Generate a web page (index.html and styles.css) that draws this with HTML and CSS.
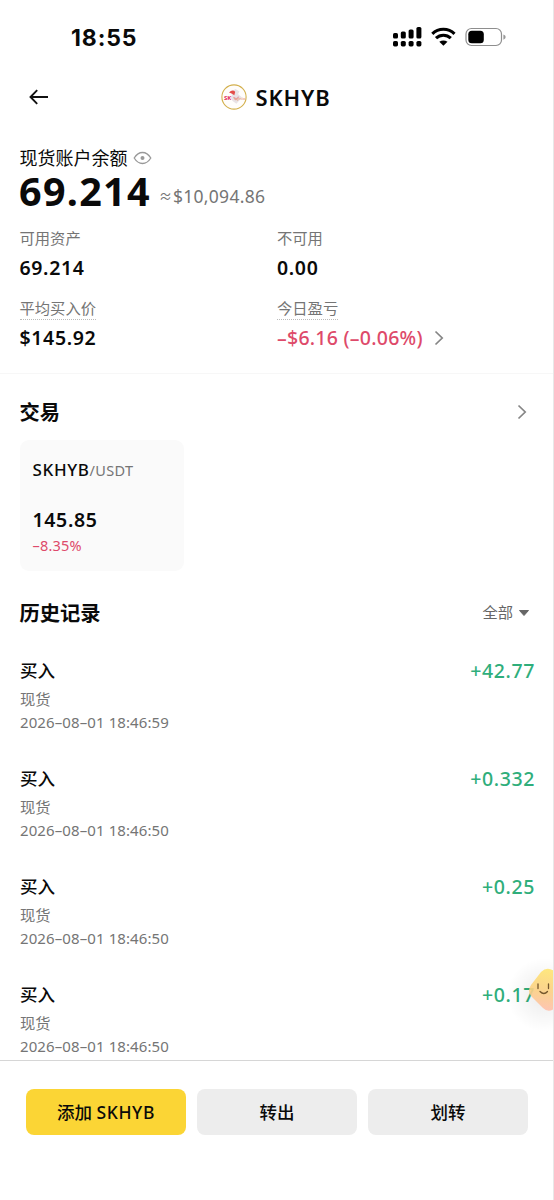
FILE: index.html
```html
<!DOCTYPE html>
<html lang="zh-CN">
<head>
<meta charset="utf-8">
<title>SKHYB</title>
<link rel="stylesheet" href="styles.css">
</head>
<body>
<div class="screen">
  <header class="status">
    <span class="clock">18:55</span>
    <svg class="status-icons" width="114" height="24" viewBox="0 0 114 24">
      <g fill="#000">
        <rect x="1" y="8" width="5" height="5.500" rx="1.6"/><rect x="8.800" y="6.500" width="5" height="7" rx="1.600"/><rect x="16.600" y="4.500" width="5" height="9" rx="1.600"/><rect x="24.400" y="2" width="5" height="11.500" rx="1.600"/>
        <rect x="1" y="16" width="5" height="5.400" rx="1.600"/><rect x="8.800" y="16" width="5" height="5.400" rx="1.600"/><rect x="16.600" y="16" width="5" height="5.400" rx="1.600"/><rect x="24.400" y="16" width="5" height="5.400" rx="1.600"/>
        <path d="M47.300 16.700q4.100-2.500 8.200 0l-4.100 4z"/>
      </g>
      <g fill="none" stroke="#000" stroke-width="3.100">
        <path d="M40.300 8.800c6.200-6 16-6 22.200 0"/><path d="M44 13.200c4.200-4 10.600-4 14.800 0"/>
      </g>
      <rect x="74" y="3.500" width="35.500" height="17" rx="5.500" fill="none" stroke="#8e8e8e" stroke-width="1.200"/>
      <rect x="76.300" y="5.800" width="15.500" height="12.500" rx="3.500"/>
      <path d="M111.400 9.500q2.300.7 2.300 2.600t-2.300 2.600z" fill="#999"/>
    </svg>
  </header>

  <nav class="nav">
    <svg class="back" width="20" height="16" viewBox="0 0 20 16"><path d="M19 8H2M8.200 1.200 1.500 8l6.700 6.800" fill="none" stroke="#111" stroke-width="1.900"/></svg>
    <div class="coin">
      <svg width="26" height="26" viewBox="0 0 26 26">
        <circle cx="13" cy="13" r="12.100" fill="#fffdfb" stroke="#d3b04d" stroke-width="1.100"/>
        <path d="M9 8.500 14.500 5l4 2.500-1.500 2.600 4 3.300-5.600 6.300-3.800-2.600-2.400-4 2-2z" fill="#e8e2e5"/>
        <path d="M8 8.500q3.200-3.300 6.200-.8l-.9 3.600q-2.400-2.300-5.300-2.800z" fill="#e44c48"/>
        <path d="m12.500 13.300 2.300 2.200 3-2.800" stroke="#e7a4ac" stroke-width="1.500" fill="none"/>
        <text class="coin-sk" x="3" y="16">SK</text><text class="coin-hy" x="13.500" y="16">hynix</text>
      </svg>
      <h1 class="coin-name">SKHYB</h1>
    </div>
  </nav>

  <section class="balance">
    <div class="balance-label">现货账户余额
      <svg width="19" height="14" viewBox="0 0 19 14"><path d="M1.200 7C3.500 3.300 6.100 1.500 9.500 1.500S15.500 3.300 17.800 7c-2.300 3.700-4.900 5.500-8.300 5.500S3.500 10.700 1.200 7z" fill="none" stroke="#999" stroke-width="1.300"/><circle cx="9.500" cy="7" r="2" fill="#999"/></svg>
    </div>
    <div class="total"><span class="amount">69.214</span><span class="approx">≈</span><span class="fiat">$10,094.86</span></div>
    <div class="stats">
      <div class="stat"><span class="label">可用资产</span><span class="value">69.214</span></div>
      <div class="stat"><span class="label">不可用</span><span class="value">0.00</span></div>
      <div class="stat"><span class="label dotted">平均买入价</span><span class="value">$145.92</span></div>
      <div class="stat"><span class="label dotted">今日盈亏</span><span class="value loss"><span class="pnl">–$6.16 (–0.06%)</span><svg width="10" height="16" viewBox="0 0 10 16"><path d="m1.500 1.500 6.700 6.500-6.700 6.500" fill="none" stroke="#858585" stroke-width="1.700"/></svg></span></div>
    </div>
  </section>

  <section class="trade">
    <div class="section-head"><h2>交易</h2><svg class="more" width="10" height="16" viewBox="0 0 10 16"><path d="m1.500 1.500 6.700 6.500-6.700 6.500" fill="none" stroke="#858585" stroke-width="1.700"/></svg></div>
    <div class="pair">
      <div class="pair-name">SKHYB<span class="quote">/USDT</span></div>
      <div class="price">145.85</div>
      <div class="change">–8.35%</div>
    </div>
  </section>

  <section class="history">
    <div class="section-head"><h2>历史记录</h2><div class="filter">全部<svg width="10" height="6" viewBox="0 0 10 6"><path d="M.5.500h9L5 5.500z" fill="#666" stroke="#666" stroke-linejoin="round"/></svg></div></div>
    <div class="record"><div class="info"><b>买入</b><span class="kind">现货</span><time>2026–08–01 18:46:59</time></div><span class="gain">+42.77</span></div>
    <div class="record"><div class="info"><b>买入</b><span class="kind">现货</span><time>2026–08–01 18:46:50</time></div><span class="gain">+0.332</span></div>
    <div class="record"><div class="info"><b>买入</b><span class="kind">现货</span><time>2026–08–01 18:46:50</time></div><span class="gain">+0.25</span></div>
    <div class="record"><div class="info"><b>买入</b><span class="kind">现货</span><time>2026–08–01 18:46:50</time></div><span class="gain">+0.17</span></div>
  </section>

  <svg class="mascot" width="54" height="84" viewBox="0 0 54 84">
    <defs>
      <linearGradient id="body" x1="0.600" y1="0" x2="0.500" y2="1"><stop offset="0" stop-color="#ffe670"/><stop offset=".55" stop-color="#fcd084"/><stop offset="1" stop-color="#ffc0ac"/></linearGradient>
      <radialGradient id="glow"><stop offset="0" stop-color="#000" stop-opacity=".08"/><stop offset="1" stop-color="#000" stop-opacity="0"/></radialGradient>
    </defs>
    <circle cx="45" cy="45" r="37" fill="url(#glow)"/>
    <path d="M42 22q6-6 13-1l14 14q4 5 0 9L55 59q-6 4-11-1L32 46q-4-5 0-11z" fill="url(#body)" fill-opacity=".9"/>
    <path d="M39 34v4.500M49.500 34v4.500M41 41.500q4 4 7.500 0" fill="none" stroke="#75572c" stroke-width="1.300" stroke-linecap="round"/>
  </svg>

  <footer class="actions">
    <button class="btn primary">添加 <span class="ticker">SKHYB</span></button>
    <button class="btn">转出</button>
    <button class="btn">划转</button>
  </footer>
</div>
</body>
</html>
```
FILE: styles.css
```css
* { box-sizing: border-box; margin: 0; padding: 0; }
body { width: 554px; height: 1200px; overflow: hidden; background: #fff; color: #0a0a0a; font-family: "Noto Sans", "Noto Sans CJK SC", sans-serif; }
svg { display: block; flex: none; }
.screen { position: relative; display: flex; flex-direction: column; width: 554px; height: 1200px; border-right: 1px solid #e8e8e8; white-space: nowrap; }

.status { display: flex; justify-content: space-between; align-items: flex-start; height: 70px; padding: 25px 47px 0 71px; }
.clock { font: 700 23px/26px Inter, sans-serif; letter-spacing: .9px; }
.nav { display: grid; grid-template-columns: 1fr auto 1fr; align-items: center; height: 54px; padding: 0 0 0 29px; }
.coin { display: flex; align-items: center; gap: 8px; margin-right: 30px; }
.coin-name { font-size: 22px; line-height: 26px; font-weight: 600; letter-spacing: .9px; }
.coin-sk { font: 700 6px "Noto Sans", sans-serif; fill: #e22858; }
.coin-hy { font: 600 4px "Noto Sans", sans-serif; fill: #e8a184; }

.balance { height: 250px; padding: 21px 20px 0; border-bottom: 1px solid #f7f7f7; }
.balance-label { display: flex; align-items: center; gap: 5px; height: 26px; font-size: 18px; line-height: 26px; margin-left: -.5px; }
.total { display: flex; height: 44px; align-items: flex-start; }
.amount { margin-left: -1px; font-size: 39.500px; line-height: 41px; font-weight: 700; letter-spacing: 1.300px; }
.approx { margin-left: 8px; font-size: 13px; line-height: 51px; color: #757575; width: 10px; }
.fiat { margin-left: 4px; font-size: 17.500px; line-height: 50px; letter-spacing: .3px; color: #757575; }
.stats { display: grid; grid-template-columns: 257.500px 1fr; grid-auto-rows: 69.500px; margin-top: 12px; margin-left: -.5px; }
.stat { display: flex; flex-direction: column; align-items: flex-start; }
.label { height: 22px; font-size: 15.300px; line-height: 22px; color: #757575; }
.dotted { border-bottom: 1px dotted #bbb; height: 23px; }
.value { margin-top: 6px; font-size: 19.500px; line-height: 26px; font-weight: 600; letter-spacing: .65px; }
.dotted + .value { margin-top: 5px; }
.value.loss { display: flex; align-items: center; gap: 11px; color: #de4a6a; font-weight: 500; letter-spacing: .25px; }

.trade { padding: 22px 0 0 20px; height: 212px; }
.section-head { display: flex; align-items: center; justify-content: space-between; height: 32px; padding-right: 26.500px; }
h2 { margin-left: -.5px; font-size: 20.300px; line-height: 32px; font-weight: 700; }
.pair { width: 164px; height: 131px; margin-top: 12px; padding: 17px 12.500px; border-radius: 9px; background: #fafafa; }
.pair-name { font-size: 17px; line-height: 26px; font-weight: 500; letter-spacing: .65px; }
.quote { font-size: 14.500px; font-weight: 400; letter-spacing: .3px; color: #757575; }
.price { margin-top: 24px; font-size: 19.500px; line-height: 26px; font-weight: 600; letter-spacing: .65px; }
.change { margin-top: 1px; font-size: 14.500px; line-height: 22px; letter-spacing: .2px; color: #de4a6a; }

.history { flex: 1; padding: 11px 0 0 20px; overflow: hidden; }
.history .section-head { padding-right: 24px; }
.filter { display: flex; align-items: center; gap: 6px; height: 22px; margin-top: -2px; font-size: 15.300px; line-height: 22px; color: #666; }
.filter svg { margin-top: 2px; }
.record { display: flex; justify-content: space-between; height: 108px; padding: 28px 18px 0 0; }
.info { display: flex; flex-direction: column; }
.info b { font-size: 17.500px; line-height: 26px; font-weight: 500; }
.kind { margin-top: 5px; font-size: 15.300px; line-height: 22px; color: #757575; }
time { margin-top: 1px; font-size: 15px; line-height: 22px; letter-spacing: .1px; color: #757575; }
.gain { margin-top: 1px; font-size: 19.500px; line-height: 26px; font-weight: 500; letter-spacing: .6px; color: #2fae7b; }
.mascot { position: absolute; left: 499px; top: 950px; }

.actions { display: flex; gap: 11px; height: 140px; padding: 28px 25px 0 26px; border-top: 1px solid #d6d6d6; background: #fff; }
.btn { flex: 1; height: 46px; border: 0; border-radius: 8px; background: #ededed; color: #0a0a0a; font-family: "Noto Sans", "Noto Sans CJK SC", sans-serif; font-size: 17.500px; line-height: 26px; font-weight: 500; }
.ticker { letter-spacing: .6px; }
.primary { background: #fbd535; }
```
